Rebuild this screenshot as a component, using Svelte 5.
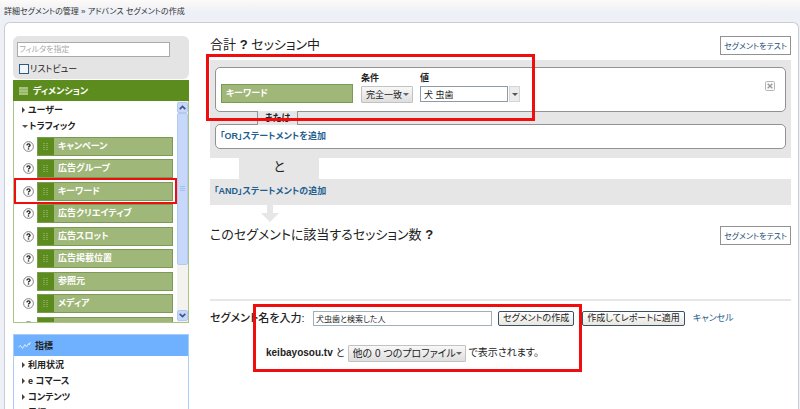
<script>
  const dimensions = [
    'キャンペーン',
    '広告グループ',
    'キーワード',
    '広告クリエイティブ',
    '広告スロット',
    '広告掲載位置',
    '参照元',
    'メディア',
    '',
  ]
  const metrics = ['利用状況', 'e コマース', 'コンテンツ', '目標']

  let filter = $state('')
  let listView = $state(false)
  let value = $state('犬 虫歯')
  let segmentName = $state('犬虫歯と検索した人')
</script>

<div class="page">
  <nav class="crumbs" aria-label="パンくず">詳細セグメントの管理 » アドバンス セグメントの作成</nav>

  <div class="panel">
    <aside>
      <div class="filter">
        <input type="text" placeholder="フィルタを指定" aria-label="フィルタを指定" bind:value={filter} />
        <label><input type="checkbox" bind:checked={listView} />リストビュー</label>
      </div>

      <section class="box dims">
        <h2>
          <svg width="9" height="8" viewBox="0 0 9 8" aria-hidden="true">
            <rect width="9" height="8" fill="#a5c37d" />
            <path d="M0 2.5h9M0 5.5h9" stroke="#93b36b" />
          </svg>
          ディメンション
        </h2>
        <div class="scroller">
          <div class="list">
            <button class="node"><i class="closed"></i>ユーザー</button>
            <button class="node"><i class="open"></i>トラフィック</button>
            <ul>
              {#each dimensions as name}
                <li class:picked={name === 'キーワード'}>
                  <svg class="help" width="11" height="11" viewBox="0 0 11 11" aria-hidden="true">
                    <circle cx="5.5" cy="5.5" r="4.9" fill="#fff" stroke="#777" stroke-width="0.9" />
                    <path d="M3.9 4.4Q4 2.9 5.5 2.9T7.1 4.3Q7.1 5 6.2 5.4 5.5 5.8 5.5 6.5" fill="none" stroke="#222" stroke-width="1.3" />
                    <rect x="4.8" y="7.3" width="1.4" height="1.3" fill="#222" />
                  </svg>
                  <div class="chip">
                    <span class="grip">
                      <svg width="6" height="8" viewBox="0 0 6 8" aria-hidden="true">
                        <path d="M0 .5h6M0 2.5h6M0 4.5h6M0 6.5h6" stroke="#83a853" stroke-dasharray="2 1" />
                      </svg>
                    </span>
                    <span class="name">{name}</span>
                  </div>
                </li>
              {/each}
            </ul>
          </div>
          <div class="bar">
            <button aria-label="上へ">
              <svg width="7" height="5" viewBox="0 0 7 5"><path d="M.7 4.2 3.5 1.4 6.3 4.2" fill="none" stroke="#3f5685" stroke-width="1.7" /></svg>
            </button>
            <div class="thumb">
              <svg width="5" height="6" viewBox="0 0 5 6"><path d="M0 .5h5M0 2.5h5M0 4.5h5" stroke="#a3bfee" /></svg>
            </div>
            <button aria-label="下へ">
              <svg width="7" height="5" viewBox="0 0 7 5"><path d="M.7 .8 3.5 3.6 6.3 .8" fill="none" stroke="#3f5685" stroke-width="1.7" /></svg>
            </button>
          </div>
        </div>
      </section>

      <section class="box metrics">
        <h2>
          <svg width="13" height="9" viewBox="0 0 13 9" aria-hidden="true">
            <path d="M.5 6 2.5 4.5 4.5 7.5 7 3.5 8.5 6 10.5 2.5 11 4 12.5 1" fill="none" stroke="#d9eaff" />
          </svg>
          指標
        </h2>
        <div class="list">
          {#each metrics as name}
            <button class="node"><i class="closed"></i>{name}</button>
          {/each}
        </div>
      </section>
    </aside>

    <main>
      <header>
        <h1>合計 <b>?</b> セッション中</h1>
        <button class="test">セグメントをテスト</button>
      </header>

      <div class="group">
        <div class="card rule">
          <div class="chip big"><span class="name">キーワード</span></div>
          <div class="field">
            <label for="cond">条件</label>
            <span class="select">
              <select id="cond"><option>完全一致</option></select>
            </span>
          </div>
          <div class="field">
            <label for="val">値</label>
            <div class="combo">
              <input id="val" type="text" bind:value />
              <button aria-label="候補を表示"><i class="open"></i></button>
            </div>
          </div>
          <button class="close" aria-label="削除">
            <svg width="10" height="10" viewBox="0 0 10 10">
              <rect x=".5" y=".5" width="9" height="9" rx="1" fill="#fafafa" stroke="#b5b5b5" />
              <path d="M2.7 2.7 7.3 7.3M7.3 2.7 2.7 7.3" stroke="#999" stroke-width="1.3" />
            </svg>
          </button>
        </div>
        <div class="or"><span>または</span></div>
        <div class="card add"><a href="#or">「OR」ステートメントを追加</a></div>
        <div class="mark first"></div>
      </div>

      <div class="and">と</div>
      <div class="andbar"><a href="#and">「AND」ステートメントの追加</a></div>
      <svg class="arrow" width="18" height="17" viewBox="0 0 18 17" aria-hidden="true">
        <path d="M6 0h6v8h6L9 17 0 8h6z" fill="#e6e6e6" />
      </svg>

      <header class="result">
        <h1>このセグメントに該当するセッション数 <b>?</b></h1>
        <button class="test">セグメントをテスト</button>
      </header>

      <form onsubmit={(e) => e.preventDefault()}>
        <div class="row">
          <label for="seg">セグメント名を入力:</label>
          <input id="seg" type="text" bind:value={segmentName} />
          <button class="push">セグメントの作成</button>
          <button class="push" type="button">作成してレポートに適用</button>
          <a href="#cancel">キャンセル</a>
        </div>
        <div class="row profile">
          <b>keibayosou.tv</b>
          <span>と</span>
          <span class="select">
            <select aria-label="プロファイル"><option>他の 0 つのプロファイル</option></select>
          </span>
          <span>で表示されます。</span>
        </div>
        <div class="mark second"></div>
      </form>
    </main>
  </div>
</div>

<style>
  :global(body) {
    background: #edf0f6;
  }

  .page,
  .page :is(input, select, button) {
    font-family: 'Liberation Sans', 'Noto Sans CJK JP', sans-serif;
    font-feature-settings: 'palt';
    color: #222;
  }

  .page {
    box-sizing: border-box;
    height: 100vh;
    padding: 0 1px 0 4px;
    overflow: hidden;
    display: flex;
    flex-direction: column;
    font-size: 9px;
    line-height: 16px;
    background: linear-gradient(#fdfaf8, #edf0f6 12px);
  }

  .page * {
    box-sizing: border-box;
  }

  h1,
  h2,
  ul {
    margin: 0;
    padding: 0;
    list-style: none;
  }

  button {
    margin: 0;
    padding: 0;
    border: 0;
    background: none;
    cursor: pointer;
  }

  a {
    color: #1f5f8f;
    text-decoration: none;
  }

  .crumbs {
    height: 22px;
    padding-top: 4px;
    flex: none;
    font-size: 8px;
    color: #333;
  }

  .panel {
    flex: 1;
    min-height: 0;
    display: flex;
    align-items: flex-start;
    gap: 21px;
    padding: 13px 7px 0 8px;
    border: 1px solid #c9ccd2;
    border-bottom: 0;
    border-radius: 6px 6px 0 0;
    background: #fff;
  }

  aside {
    flex: none;
    width: 176px;
  }

  .filter {
    height: 43px;
    margin-bottom: 1px;
    padding: 6px 4px 0;
    border-radius: 6px;
    background: #e4e4e4;
  }

  .filter input[type='text'] {
    display: block;
    width: 153px;
    height: 15px;
    padding: 0 1px;
    border: 1px solid #aaa;
    background: #fff;
    font-size: 8px;
  }

  .filter input::placeholder {
    color: #aaa;
  }

  .filter label {
    display: flex;
    align-items: center;
    gap: 1px;
    margin: 4px 0 0 2px;
  }

  .filter input[type='checkbox'] {
    appearance: none;
    width: 10px;
    height: 10px;
    margin: 0;
    border: 1px solid #2d5a86;
    background: #f3f6f8;
  }

  .filter input[type='checkbox']:checked {
    background: #2d5a86;
  }

  .box h2 {
    display: flex;
    align-items: center;
    height: 21px;
    font-size: 9px;
    line-height: 16px;
  }

  .dims h2 {
    gap: 5px;
    padding-left: 6px;
    color: #fff;
    background: #5c8c1d;
  }

  .scroller {
    display: flex;
    height: 222px;
    border: 1px solid #a9c585;
    border-top: 0;
    overflow: hidden;
  }

  .list {
    flex: 1;
    padding-top: 1px;
  }

  .node {
    display: flex;
    align-items: center;
    gap: 1px;
    width: 100%;
    height: 16px;
    padding-left: 8px;
    font-size: 9px;
    font-weight: bold;
    line-height: 16px;
  }

  .closed,
  .open {
    flex: none;
    border: 3px solid transparent;
  }

  .closed {
    width: 5px;
    border-width: 3px 0 3px 3px;
    border-left-color: #444;
  }

  .open {
    width: 6px;
    height: 3px;
    border-width: 3px 3px 0;
    border-top-color: #555;
  }

  .dims ul {
    padding: 3px 4px 0 9px;
  }

  .dims li {
    position: relative;
    display: flex;
    align-items: center;
    gap: 3px;
    margin-bottom: 3px;
  }

  .dims li:nth-child(even) {
    margin-bottom: 4px;
  }

  .help {
    flex: none;
  }

  .chip {
    flex: 1;
    display: flex;
    height: 19px;
    border: 1px solid #7d9a54;
    background: #9fb779;
    font-size: 9px;
    font-weight: bold;
    line-height: 17px;
    color: #fff;
  }

  .grip {
    display: flex;
    align-items: center;
    justify-content: center;
    width: 16px;
    background: #5c8c1d;
  }

  .name {
    padding-left: 4px;
  }

  .picked::after {
    content: '';
    position: absolute;
    inset: -4px -4px -3px -9px;
    border: 2px solid #f00d0d;
  }

  .bar {
    flex: none;
    display: flex;
    flex-direction: column;
    width: 11px;
    padding: 1px 0;
    background: #f3f2ee;
  }

  .bar button,
  .thumb {
    display: flex;
    align-items: center;
    justify-content: center;
    border: 1px solid #b3c9f2;
    border-radius: 2px;
    background: #c7d8fa;
  }

  .bar button {
    height: 11px;
  }

  .bar button:last-child {
    margin-top: auto;
  }

  .thumb {
    height: 152px;
  }

  .metrics {
    margin-top: 11px;
    border: 1px solid #a9cdf7;
  }

  .metrics h2 {
    gap: 4px;
    padding-left: 4px;
    background: #70b1ff;
  }

  main {
    flex: 1;
    min-width: 0;
  }

  header {
    display: flex;
    align-items: center;
    justify-content: space-between;
    height: 18px;
  }

  h1 {
    font-size: 13px;
    font-weight: normal;
    line-height: 16px;
    white-space: nowrap;
  }

  .page .test {
    height: 19px;
    padding: 0 3px;
    border: 1px solid #929292;
    background: #fff;
    color: #1f4f73;
    font-size: 8px;
    width: 71px;
    white-space: nowrap;
  }

  .group {
    position: relative;
    margin-top: 6px;
    padding: 7px 5px 9px;
    background: #e6e6e6;
  }

  .card {
    border: 1px solid #929292;
    border-radius: 5px;
    background: #fff;
  }

  .rule {
    display: flex;
    align-items: flex-start;
    height: 45px;
    padding: 3px 10px 0 5px;
  }

  .big {
    flex: none;
    width: 132px;
    margin: 13px 8px 0 0;
  }

  .field {
    margin-right: 7px;
  }

  .field label {
    display: block;
    height: 15px;
    font-weight: bold;
    line-height: 15px;
  }

  .select {
    position: relative;
    display: inline-flex;
  }

  .select::after {
    content: '';
    position: absolute;
    right: 4px;
    top: 7px;
    border: 3px solid transparent;
    border-top-color: #666;
    border-bottom: 0;
    pointer-events: none;
  }

  select {
    appearance: none;
    width: 52px;
    height: 17px;
    padding: 0 0 0 4px;
    border: 1px solid #c2c2c2;
    border-radius: 1px;
    background: linear-gradient(#f8f8f8, #dedede);
    font-size: 9px;
  }

  .combo {
    display: flex;
    gap: 1px;
  }

  .combo input {
    width: 88px;
    height: 16px;
    padding: 0 3px;
    border: 1px solid #8c9ba5;
    font-size: 9px;
  }

  .combo button {
    display: flex;
    align-items: center;
    justify-content: center;
    width: 11px;
    height: 16px;
    border: 1px solid #d5d5d5;
    background: #ececec;
  }

  .close {
    display: flex;
    margin: 10px 0 0 auto;
  }

  .or {
    position: relative;
    height: 13px;
    padding-left: 42px;
  }

  .or span {
    position: relative;
    display: block;
    width: 41px;
    height: 14px;
    margin-top: -1px;
    border: solid #929292;
    border-width: 0 1px;
    background: #e6e6e6;
    font-weight: bold;
    line-height: 14px;
    text-align: center;
  }

  .add {
    height: 25px;
    padding-left: 4px;
    line-height: 23px;
    font-weight: bold;
  }

  .mark {
    position: absolute;
    border: 3px solid #f00d0d;
    pointer-events: none;
  }

  .first {
    left: -4px;
    top: -6px;
    width: 329px;
    height: 67px;
  }

  .and {
    width: 80px;
    height: 21px;
    margin-left: 29px;
    background: #e6e6e6;
    font-size: 13px;
    line-height: 18px;
    text-align: center;
  }

  .andbar {
    height: 26px;
    padding-left: 4px;
    background: #e6e6e6;
    font-weight: bold;
    line-height: 25px;
  }

  .arrow {
    display: block;
    margin-left: 51px;
  }

  .result {
    margin-top: 4px;
  }

  form {
    position: relative;
    margin-top: 55px;
    padding-top: 9px;
    border-top: 2px solid #e6e6e6;
  }

  .row {
    display: flex;
    align-items: center;
    height: 16px;
    white-space: nowrap;
  }

  .row label {
    flex: none;
    width: 103px;
    font-size: 11px;
    font-weight: 500;
  }

  .row input {
    width: 179px;
    height: 15px;
    margin-right: 6px;
    padding: 0 2px;
    border: 1px solid #9fb0bd;
    font-size: 8px;
  }

  .push {
    height: 15px;
    margin-right: 8px;
    padding: 0 4px;
    border: 1px solid #3c4f63;
    border-radius: 2px;
    background: linear-gradient(#fff, #e8e6df);
    font-size: 9px;
    line-height: 13px;
  }

  .profile {
    gap: 3px;
    margin: 19px 0 0 56px;
    font-size: 10px;
  }

  .profile select {
    width: 118px;
    font-size: 10px;
  }

  .second {
    left: 43px;
    top: 3px;
    width: 329px;
    height: 68px;
  }
</style>
